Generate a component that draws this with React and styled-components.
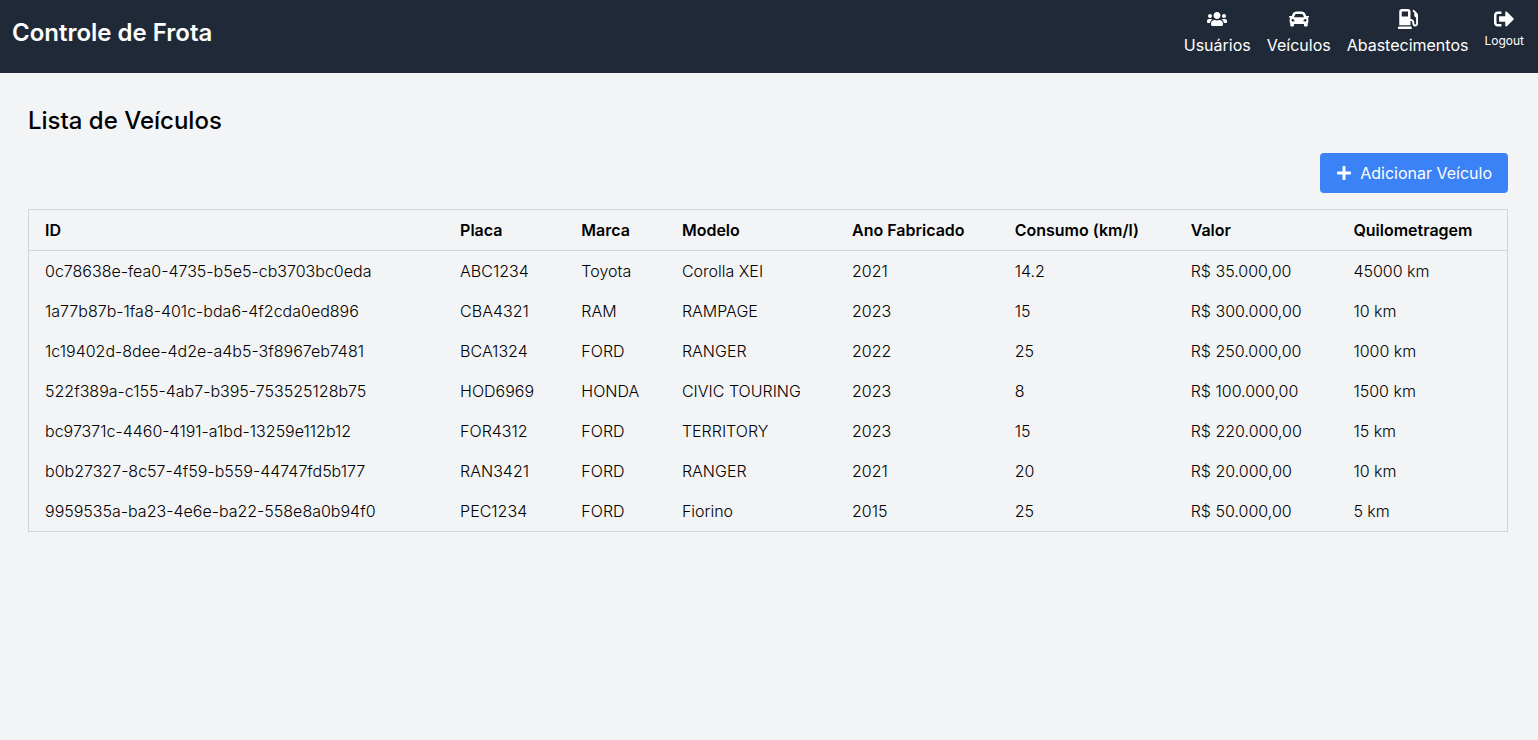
import React from "react";
import styled, { createGlobalStyle } from "styled-components";
import { FaUsers, FaCar, FaGasPump, FaSignOutAlt, FaPlus } from "react-icons/fa";

const GlobalStyle = createGlobalStyle`
  *, *::before, *::after { box-sizing: border-box; }
  body {
    margin: 0;
    background: #f3f4f6;
    color: #000;
    font-family: Inter, "Liberation Sans", sans-serif;
    font-size: 16px;
    line-height: 24px;
  }
`;

const TopBar = styled.header`
  display: flex;
  justify-content: space-between;
  align-items: flex-start;
  padding: 9px 14px 16px 12px;
  background: #1f2937;
  color: #fff;
`;

const Brand = styled.h1`
  margin: 8px 0 0;
  font-size: 24px;
  line-height: 32px;
  font-weight: 600;
`;

const Nav = styled.nav`
  display: flex;
  align-items: flex-start;
  gap: 16px;
`;

const NavLink = styled.a`
  display: flex;
  flex-direction: column;
  align-items: center;
  gap: 4px;
  color: inherit;
  text-decoration: none;
  svg { width: 20px; height: 20px; }
`;

const LogoutButton = styled.button`
  display: flex;
  flex-direction: column;
  align-items: center;
  gap: 4px;
  padding: 0;
  border: 0;
  background: none;
  color: inherit;
  font: inherit;
  font-size: 12px;
  line-height: 16px;
  cursor: pointer;
  svg { width: 20px; height: 20px; }
`;

const Content = styled.main`
  padding: 32px 30px 32px 28px;
`;

const Title = styled.h2`
  margin: 0 0 16px;
  font-size: 24px;
  line-height: 32px;
  font-weight: 500;
`;

const Actions = styled.div`
  display: flex;
  justify-content: flex-end;
  margin-bottom: 16px;
`;

const AddButton = styled.button`
  display: flex;
  align-items: center;
  gap: 8px;
  padding: 8px 16px;
  border: 0;
  border-radius: 4px;
  background: #3b82f6;
  color: #fff;
  font: inherit;
  cursor: pointer;
`;

const Table = styled.table`
  width: 100%;
  border-collapse: collapse;
  border: 1px solid #d1d5db;
  text-align: left;
`;

const Column = styled.col`
  width: ${({ $share }) => $share}%;
`;

const HeadRow = styled.tr`
  border-bottom: 1px solid #d1d5db;
`;

const HeadCell = styled.th`
  padding: 8px 16px;
  font-weight: 600;
`;

const Cell = styled.td`
  padding: 8px 16px;
  font-weight: 300;
`;

const columns = [
  { name: "ID", share: 28.1 },
  { name: "Placa", share: 8.2 },
  { name: "Marca", share: 6.8 },
  { name: "Modelo", share: 11.5 },
  { name: "Ano Fabricado", share: 11 },
  { name: "Consumo (km/l)", share: 11.9 },
  { name: "Valor", share: 11 },
  { name: "Quilometragem", share: 11.5 },
];

const vehicles = [
  ["0c78638e-fea0-4735-b5e5-cb3703bc0eda", "ABC1234", "Toyota", "Corolla XEI", "2021", "14.2", "R$ 35.000,00", "45000 km"],
  ["1a77b87b-1fa8-401c-bda6-4f2cda0ed896", "CBA4321", "RAM", "RAMPAGE", "2023", "15", "R$ 300.000,00", "10 km"],
  ["1c19402d-8dee-4d2e-a4b5-3f8967eb7481", "BCA1324", "FORD", "RANGER", "2022", "25", "R$ 250.000,00", "1000 km"],
  ["522f389a-c155-4ab7-b395-753525128b75", "HOD6969", "HONDA", "CIVIC TOURING", "2023", "8", "R$ 100.000,00", "1500 km"],
  ["bc97371c-4460-4191-a1bd-13259e112b12", "FOR4312", "FORD", "TERRITORY", "2023", "15", "R$ 220.000,00", "15 km"],
  ["b0b27327-8c57-4f59-b559-44747fd5b177", "RAN3421", "FORD", "RANGER", "2021", "20", "R$ 20.000,00", "10 km"],
  ["9959535a-ba23-4e6e-ba22-558e8a0b94f0", "PEC1234", "FORD", "Fiorino", "2015", "25", "R$ 50.000,00", "5 km"],
];

export default function App() {
  return (
    <>
      <GlobalStyle />
      <TopBar>
        <Brand>Controle de Frota</Brand>
        <Nav>
          <NavLink href="#usuarios"><FaUsers />Usuários</NavLink>
          <NavLink href="#veiculos"><FaCar />Veículos</NavLink>
          <NavLink href="#abastecimentos"><FaGasPump />Abastecimentos</NavLink>
          <LogoutButton type="button"><FaSignOutAlt />Logout</LogoutButton>
        </Nav>
      </TopBar>
      <Content>
        <Title>Lista de Veículos</Title>
        <Actions>
          <AddButton type="button"><FaPlus />Adicionar Veículo</AddButton>
        </Actions>
        <Table>
          <colgroup>
            {columns.map(({ name, share }) => <Column key={name} $share={share} />)}
          </colgroup>
          <thead>
            <HeadRow>
              {columns.map(({ name }) => <HeadCell key={name} scope="col">{name}</HeadCell>)}
            </HeadRow>
          </thead>
          <tbody>
            {vehicles.map((vehicle) => (
              <tr key={vehicle[0]}>
                {vehicle.map((value, i) => <Cell key={columns[i].name}>{value}</Cell>)}
              </tr>
            ))}
          </tbody>
        </Table>
      </Content>
    </>
  );
}
